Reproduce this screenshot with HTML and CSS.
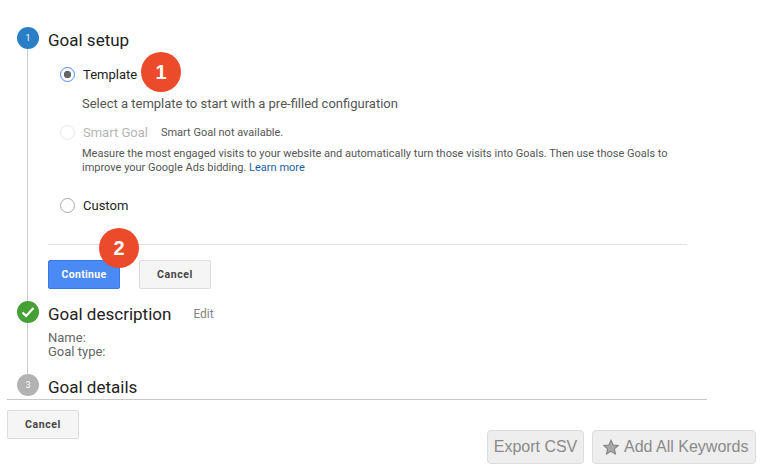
FILE: index.html
```html
<!DOCTYPE html>
<html lang="en">
<head>
  <meta charset="UTF-8">
  <title>Goal setup</title>
  <link rel="stylesheet" href="styles.css">
</head>
<body>
  <div class="wizard">
    <div class="step-head first">
      <span class="num blue">1</span>
      <h2>Goal setup</h2>
    </div>
    <div class="step-body setup">
      <div class="option">
        <span class="radio checked"></span>
        <span class="opt-label">Template</span>
        <span class="badge badge-one">1</span>
      </div>
      <p class="opt-desc template-desc">Select a template to start with a pre-filled configuration</p>

      <div class="option smart">
        <span class="radio disabled"></span>
        <span class="opt-label muted">Smart Goal</span>
        <span class="note">Smart Goal not available.</span>
      </div>
      <p class="opt-desc small">Measure the most engaged visits to your website and automatically turn those visits into Goals. Then use those Goals to improve your Google Ads bidding. <a href="#">Learn more</a></p>

      <div class="option custom">
        <span class="radio"></span>
        <span class="opt-label">Custom</span>
      </div>

      <div class="actions">
        <button class="btn primary">Continue</button>
        <button class="btn">Cancel</button>
        <span class="badge badge-two">2</span>
      </div>
    </div>

    <div class="step-head">
      <span class="num green">
        <svg width="14" height="12" viewBox="0 0 14 12"><path d="M1.5 6.5l3.6 3.4 7.4-8" fill="none" stroke="#fff" stroke-width="2.2"/></svg>
      </span>
      <h2>Goal description</h2>
      <span class="edit">Edit</span>
    </div>
    <div class="step-body desc">
      <div>Name:</div>
      <div>Goal type:</div>
    </div>

    <div class="step-head last">
      <span class="num grey">3</span>
      <h2>Goal details</h2>
    </div>
  </div>

  <div class="footer">
    <button class="btn">Cancel</button>
  </div>

  <div class="tools">
    <button class="tool export">Export CSV</button>
    <button class="tool add">
      <svg width="16" height="16" viewBox="0 0 18 17"><path d="M9 1l2.4 5.2 5.6.6-4.2 3.8 1.2 5.6L9 13.4l-5 2.8 1.2-5.6L1 6.8l5.6-.6z" fill="#a9a9a9" stroke="#808080" stroke-width="1.2"/></svg>
      Add All Keywords
    </button>
  </div>
</body>
</html>
```

FILE: styles.css
```css
* {
  box-sizing: border-box;
}

body {
  margin: 0;
  font-family: Roboto, "Liberation Sans", sans-serif;
  color: #222;
  background-color: #fff;
}

.wizard {
  width: 700px;
  margin-left: 7px;
  padding: 27px 0 0 10px;
  border-bottom: 1px solid #c8c8c8;
}

.step-head {
  display: flex;
  align-items: center;
  height: 22px;
}

.step-head h2 {
  margin: 0 0 0 9px;
  padding-top: 3px;
  font-size: 17px;
  font-weight: 400;
  color: #222;
}

.step-head.last {
  height: 25px;
  align-items: flex-start;
}

.step-head.last h2 {
  padding-top: 3px;
}

.num {
  display: flex;
  align-items: center;
  justify-content: center;
  width: 22px;
  height: 22px;
  border-radius: 50%;
  color: #fff;
  font-size: 9px;
}

.blue {
  background-color: #2a7fc4;
}

.green {
  background-color: #45a035;
}

.grey {
  background-color: #b3b3b3;
}

.edit {
  margin-left: 22px;
  padding-top: 3px;
  font-size: 12px;
  color: #858585;
}

.step-body {
  position: relative;
  margin-left: 10px;
  padding-left: 20px;
  border-left: 1px solid #ccc;
}

.setup {
  height: 252px;
  padding-top: 16px;
}

.option {
  display: flex;
  align-items: center;
  height: 18px;
  padding-left: 12px;
}

.radio {
  width: 15px;
  height: 15px;
  margin-right: 8px;
  border: 1px solid #aaa;
  border-radius: 50%;
  background-color: #fff;
}

.radio.checked {
  border-color: #4a8af4;
  background: radial-gradient(circle, #666 0, #666 3.4px, #fff 4px);
}

.radio.disabled {
  border-color: #e8e8e8;
}

.opt-label {
  font-size: 13px;
  color: #222;
}

.muted {
  color: #b5b5b5;
}

.note {
  margin-left: 13px;
  font-size: 11px;
  color: #555;
}

.opt-desc {
  margin: 0;
  padding-left: 34px;
  font-size: 13px;
  color: #555;
}

.template-desc {
  margin-top: 13px;
  line-height: 16px;
}

.smart {
  margin-top: 11px;
}

.small {
  margin-top: 6px;
  width: 640px;
  font-size: 11px;
  line-height: 14px;
}

.small a {
  color: #1a5fa8;
  text-decoration: none;
}

.custom {
  margin-top: 21px;
}

.actions {
  display: flex;
  gap: 19px;
  margin-top: 30px;
  padding-top: 15px;
  width: 639px;
  border-top: 1px solid #e0e0e0;
}

.btn {
  width: 72px;
  height: 29px;
  padding: 0;
  border: 1px solid #dcdcdc;
  border-radius: 2px;
  background-color: #f5f5f5;
  color: #444;
  font-family: Roboto, "Liberation Sans", sans-serif;
  font-size: 10.5px;
  font-weight: 700;
  letter-spacing: 0.6px;
}

.btn.primary {
  border-color: #3b78e7;
  background-color: #4a8af4;
  color: #fff;
  letter-spacing: 0.3px;
}

.badge {
  position: absolute;
  display: flex;
  align-items: center;
  justify-content: center;
  width: 40px;
  height: 40px;
  border-radius: 50%;
  background-color: #eb4b2b;
  color: #fff;
  font-family: "Liberation Sans", sans-serif;
  font-size: 20px;
  font-weight: 700;
}

.badge-one {
  left: 113px;
  top: 3px;
}

.badge-two {
  left: 71px;
  top: 179px;
}

.desc {
  height: 51px;
  padding-top: 8px;
  font-size: 13px;
  line-height: 14px;
  color: #666;
}

.footer {
  margin: 10px 0 0 7px;
}

.tools {
  position: absolute;
  right: 6px;
  top: 430px;
  display: flex;
  gap: 8px;
}

.tool {
  display: flex;
  align-items: center;
  gap: 5px;
  height: 34px;
  padding: 0;
  border: 1px solid #dcdcdc;
  border-radius: 4px;
  background-color: #eee;
  color: #8a8a8a;
  font-family: "Liberation Sans", sans-serif;
  font-size: 16px;
}

.export {
  width: 97px;
  justify-content: center;
}

.add {
  width: 164px;
  padding-left: 10px;
}
```
